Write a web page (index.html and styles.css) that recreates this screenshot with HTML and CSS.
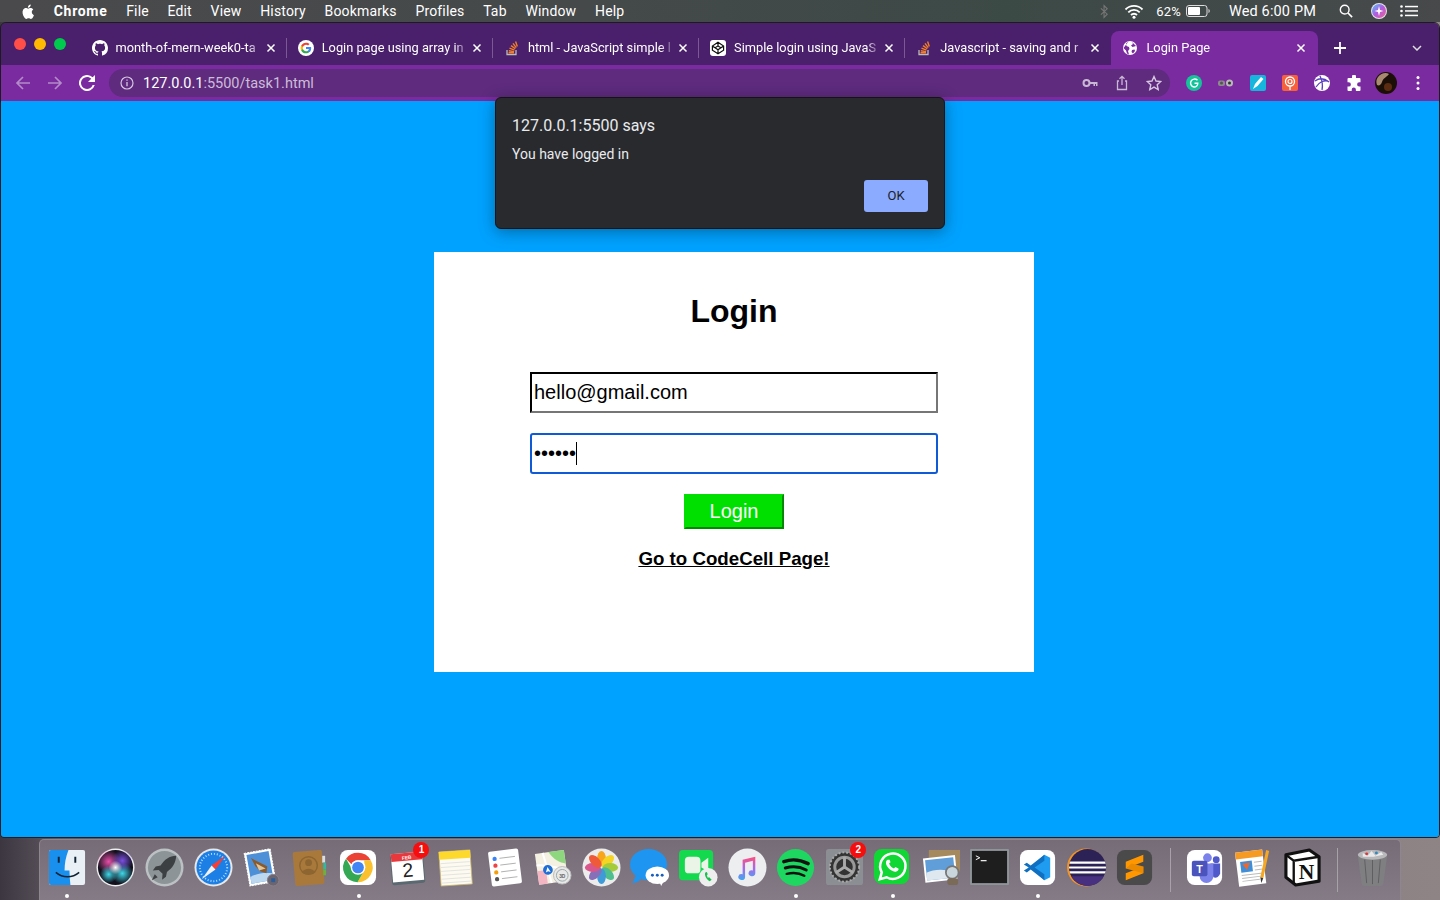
FILE: index.html
```html
<!DOCTYPE html>
<html lang="en">
<head>
<meta charset="utf-8">
<title>Login Page</title>
<link rel="stylesheet" href="styles.css">
</head>
<body>
<svg class="defs" width="0" height="0" aria-hidden="true">
  <defs>
    <symbol id="gh" viewBox="0 0 16 16"><path fill="#fff" d="M8 0C3.58 0 0 3.58 0 8c0 3.54 2.29 6.53 5.47 7.59.4.07.55-.17.55-.38 0-.19-.01-.82-.01-1.49-2.01.37-2.53-.49-2.69-.94-.09-.23-.48-.94-.82-1.13-.28-.15-.68-.52-.01-.53.63-.01 1.08.58 1.23.82.72 1.21 1.87.87 2.33.66.07-.52.28-.87.51-1.07-1.78-.2-3.64-.89-3.64-3.95 0-.87.31-1.59.82-2.15-.08-.2-.36-1.02.08-2.12 0 0 .67-.21 2.2.82.64-.18 1.32-.27 2-.27.68 0 1.36.09 2 .27 1.53-1.04 2.2-.82 2.2-.82.44 1.1.16 1.92.08 2.12.51.56.82 1.27.82 2.15 0 3.07-1.87 3.75-3.65 3.95.29.25.54.73.54 1.48 0 1.07-.01 1.93-.01 2.2 0 .21.15.46.55.38A8.013 8.013 0 0016 8c0-4.42-3.58-8-8-8z"/></symbol>
    <symbol id="goog" viewBox="0 0 48 48"><circle cx="24" cy="24" r="24" fill="#fff"/><g transform="translate(6.5 6.5) scale(.73)"><path fill="#4285f4" d="M45.12 24.5c0-1.56-.14-3.06-.4-4.5H24v8.51h11.84c-.51 2.75-2.06 5.08-4.39 6.64v5.52h7.11c4.16-3.83 6.56-9.47 6.56-16.17z"/><path fill="#34a853" d="M24 46c5.94 0 10.92-1.97 14.56-5.33l-7.11-5.52c-1.97 1.32-4.49 2.1-7.45 2.1-5.73 0-10.58-3.87-12.31-9.07H4.34v5.7C7.96 41.07 15.4 46 24 46z"/><path fill="#fbbc05" d="M11.69 28.18C11.25 26.86 11 25.45 11 24s.25-2.86.69-4.18v-5.7H4.34C2.85 17.09 2 20.45 2 24c0 3.55.85 6.91 2.34 9.88l7.35-5.7z"/><path fill="#ea4335" d="M24 10.75c3.23 0 6.13 1.11 8.41 3.29l6.31-6.31C34.91 4.18 29.93 2 24 2 15.4 2 7.96 6.93 4.34 14.12l7.35 5.7c1.73-5.2 6.58-9.07 12.31-9.07z"/></g></symbol>
    <symbol id="so" viewBox="0 0 16 16"><path d="M3 10v4.5h9V10" fill="none" stroke="#bbb" stroke-width="1.3"/><g stroke="#f48024" stroke-width="1.4"><path d="M4.6 12.8h5.4"/><path d="M4.8 10.7l5.3.9"/><path d="M5.5 8.2l5 2"/><path d="M7 5.6l4.3 3.1"/><path d="M9 3.4l3.2 4.2"/><path d="M11.6 1.6l1.7 4.8"/></g></symbol>
    <symbol id="cube" viewBox="0 0 16 16"><rect width="16" height="16" rx="3" fill="#fff"/><path d="M8 2.3L13.6 6v4.2L8 13.8 2.4 10.2V6z M2.4 6L8 9.8 13.6 6 M8 2.3v3.6L4.7 8 M8 5.9L11.3 8 M8 9.8v4" fill="none" stroke="#111" stroke-width="1.2"/></symbol>
    <symbol id="globe" viewBox="0 0 16 16"><circle cx="8" cy="8" r="7" fill="#fff"/><path d="M6.5 1.5L4 3.5l.5 2.5 2.5 1 .5 2L6 11l1 3.5-2-1-1-3L1.5 8M10 2l1 2-2 1.5 1.5 1.5 3.5-1M10 10l2.5-.5.5 1.5-2 2.5-1.5-1.5z" fill="#7a2ba0"/></symbol>
    <symbol id="close" viewBox="0 0 10 10"><path d="M1.5 1.5l7 7M8.5 1.5l-7 7" stroke="#fff" stroke-width="1.5" fill="none"/></symbol>
  </defs>
</svg>

<header class="menubar">
  <nav class="menu-left">
    <svg class="apple" viewBox="0 0 14 16"><path fill="#fff" d="M11.6 8.5c0-1.8 1.5-2.7 1.6-2.7-.9-1.3-2.2-1.5-2.7-1.5-1.1-.1-2.2.7-2.8.7-.6 0-1.5-.7-2.4-.7C4.1 4.3 3 5 2.3 6.1.9 8.5 2 12.1 3.3 14c.7 1 1.4 2 2.4 2 1 0 1.3-.6 2.5-.6 1.1 0 1.4.6 2.4.6 1 0 1.7-.9 2.3-1.9.7-1.1 1-2.2 1-2.3-.1 0-2.3-.9-2.3-3.3zM9.7 2.9c.5-.7.9-1.6.8-2.5-.8 0-1.7.5-2.3 1.2-.5.6-.9 1.500-.8 2.4.9.1 1.8-.4 2.3-1.1z"/></svg>
    <strong class="menu-app">Chrome</strong>
    <span>File</span><span>Edit</span><span>View</span><span>History</span><span>Bookmarks</span><span>Profiles</span><span>Tab</span><span>Window</span><span>Help</span>
  </nav>
  <div class="menu-right">
    <svg class="st-bt" viewBox="0 0 10 16"><path d="M1 4.5l7 6.5-3.5 3.5v-13L8 5 1 11.5" fill="none" stroke="#777" stroke-width="1.2"/></svg>
    <svg class="st-wifi" viewBox="0 0 20 15"><g fill="none" stroke="#fff" stroke-width="1.8"><path d="M1.5 5.5a12 12 0 0117 0"/><path d="M4.3 8.3a8 8 0 0111.4 0"/><path d="M7 11a4.2 4.2 0 016 0"/></g><circle cx="10" cy="13.3" r="1.5" fill="#fff"/></svg>
    <span class="st-pct">62%</span>
    <svg class="st-batt" viewBox="0 0 24 12"><rect x=".5" y=".5" width="20.5" height="11" rx="2.5" fill="none" stroke="#ddd"/><rect x="2" y="2" width="12" height="8" rx="1" fill="#fff"/><path d="M22.5 4v4c.8-.3 1.2-1 1.2-2s-.4-1.7-1.2-2z" fill="#ddd"/></svg>
    <span class="st-time">Wed 6:00 PM</span>
    <svg class="st-search" viewBox="0 0 16 16"><circle cx="6.5" cy="6.5" r="5" fill="none" stroke="#fff" stroke-width="1.6"/><path d="M10.3 10.3L15 15" stroke="#fff" stroke-width="1.9"/></svg>
    <svg class="st-siri" viewBox="0 0 16 16"><defs><linearGradient id="sg" x1="0" y1="0" x2="1" y2="1"><stop offset="0" stop-color="#4fc3f7"/><stop offset=".5" stop-color="#b05be0"/><stop offset="1" stop-color="#f06292"/></linearGradient></defs><circle cx="8" cy="8" r="8" fill="#e6e6ea"/><circle cx="8" cy="8" r="7" fill="url(#sg)"/><path d="M8 3l1 4 3.5 1-3.5 1-1 4-1-4-3.5-1 3.5-1z" fill="#fff"/></svg>
    <svg class="st-list" viewBox="0 0 18 12"><g fill="#fff"><circle cx="1.5" cy="1.5" r="1.3"/><circle cx="1.5" cy="6" r="1.3"/><circle cx="1.5" cy="10.5" r="1.3"/><rect x="5" y=".8" width="13" height="1.5"/><rect x="5" y="5.2" width="13" height="1.5"/><rect x="5" y="9.7" width="13" height="1.5"/></g></svg>
  </div>
</header>

<main class="window">
  <div class="tabstrip">
    <div class="lights"><i class="l-red"></i><i class="l-yellow"></i><i class="l-green"></i></div>
    <div class="tab"><svg class="fav"><use href="#gh"/></svg><span class="tab-title">month-of-mern-week0-ta</span><svg class="tab-x"><use href="#close"/></svg></div>
    <div class="tab"><svg class="fav"><use href="#goog"/></svg><span class="tab-title">Login page using array in</span><svg class="tab-x"><use href="#close"/></svg></div>
    <div class="tab"><svg class="fav"><use href="#so"/></svg><span class="tab-title">html - JavaScript simple l</span><svg class="tab-x"><use href="#close"/></svg></div>
    <div class="tab"><svg class="fav"><use href="#cube"/></svg><span class="tab-title">Simple login using JavaS</span><svg class="tab-x"><use href="#close"/></svg></div>
    <div class="tab tab-last"><svg class="fav"><use href="#so"/></svg><span class="tab-title">Javascript - saving and r</span><svg class="tab-x"><use href="#close"/></svg></div>
    <div class="tab tab-active"><svg class="fav"><use href="#globe"/></svg><span class="tab-title">Login Page</span><svg class="tab-x"><use href="#close"/></svg></div>
    <svg class="newtab" viewBox="0 0 12 12"><path d="M6 0v12M0 6h12" stroke="#fff" stroke-width="1.8"/></svg>
    <svg class="tabmenu" viewBox="0 0 10 6"><path d="M1 1l4 4 4-4" fill="none" stroke="#ddd" stroke-width="1.5"/></svg>
  </div>

  <div class="toolbar">
    <svg class="nav" viewBox="0 0 16 16"><path d="M15 8H2M8 2L2 8l6 6" fill="none" stroke="#b48bc9" stroke-width="1.7"/></svg>
    <svg class="nav" viewBox="0 0 16 16"><path d="M1 8h13M8 2l6 6-6 6" fill="none" stroke="#b48bc9" stroke-width="1.7"/></svg>
    <svg class="nav" viewBox="0 0 16 16"><path fill="#fff" d="M13.65 2.35A8 8 0 1 0 15.73 10h-2.08A6 6 0 1 1 8 2c1.66 0 3.14.69 4.22 1.78L9 7h7V0z"/></svg>
    <div class="omnibox">
      <svg class="info" viewBox="0 0 14 14"><circle cx="7" cy="7" r="6" fill="none" stroke="#d6c6e0" stroke-width="1.2"/><path d="M7 6v4.2M7 3.4v1.4" stroke="#d6c6e0" stroke-width="1.3"/></svg>
      <span class="url"><b>127.0.0.1</b>:5500/task1.html</span>
      <svg class="omni-ico" viewBox="0 0 16 16"><circle cx="4.5" cy="8" r="3" fill="none" stroke="#c9b8d4" stroke-width="2"/><path d="M7.5 7h8v4H14V9h-1v2h-1.500V9h-4z" fill="#c9b8d4"/></svg>
      <svg class="omni-ico" viewBox="0 0 16 16"><path d="M5 6H3.5v8.500h9V6H11M8 10V1.500M5.500 3.800L8 1.300l2.500 2.500" fill="none" stroke="#c9b8d4" stroke-width="1.3"/></svg>
      <svg class="omni-ico" viewBox="0 0 16 16"><path d="M8 1.500l2 4.500 4.800.5-3.600 3.200 1 4.800L8 12.100l-4.200 2.400 1-4.800L1.200 6.500 6 6z" fill="none" stroke="#d6c6e0" stroke-width="1.4"/></svg>
    </div>
    <div class="exts">
      <svg class="ext" viewBox="0 0 16 16"><circle cx="8" cy="8" r="8" fill="#15c39a"/><path d="M11.500 5.300A4 4 0 108 12a3.800 3.800 0 003.800-3.800H8.500" fill="none" stroke="#fff" stroke-width="1.4"/></svg>
      <svg class="ext" viewBox="0 0 16 16"><rect x="0" y="5.5" width="7" height="5.5" rx="2" fill="#8c8c8c"/><circle cx="11.5" cy="8" r="3.5" fill="#b9b9b9"/><circle cx="11.5" cy="8" r="1.5" fill="#333"/><circle cx="3.5" cy="8" r="1.5" fill="#555"/></svg>
      <svg class="ext" viewBox="0 0 16 16"><rect width="16" height="16" rx="2" fill="#15b5dd"/><path d="M3 14l2-5 6-7 2.500 2-6 7z" fill="#fff"/></svg>
      <svg class="ext" viewBox="0 0 16 16"><rect width="16" height="16" rx="2" fill="#f7603c"/><circle cx="8" cy="6.5" r="4.5" fill="none" stroke="#fff" stroke-width="1.3"/><circle cx="8" cy="6.5" r="2" fill="none" stroke="#fff" stroke-width="1.2"/><path d="M8 11v4" stroke="#fff" stroke-width="1.3"/></svg>
      <svg class="ext" viewBox="0 0 16 16"><circle cx="8" cy="8" r="8" fill="#fff"/><g fill="none" stroke="#5a3fc0" stroke-width="1.3"><path d="M1 6c4-3 9-3 14 1M2 12c3-5 8-7 12-6M6 1c2 4 3 9 2 14"/></g></svg>
      <svg class="ext" viewBox="0 0 16 16"><path fill="#fff" d="M6 1.500a2 2 0 014 0V3h3.500a1 1 0 011 1v3.300h-1.300a2.100 2.100 0 000 4.200h1.300V15a1 1 0 01-1 1H9.900v-1.300a2.100 2.100 0 00-4.200 0V16H2.500a1 1 0 01-1-1v-3.400h1.200a2.200 2.200 0 000-4.400H1.500V4a1 1 0 011-1H6z"/></svg>
      <svg class="ext avatar" viewBox="0 0 22 22"><circle cx="11" cy="11" r="11" fill="#1c0f08"/><path d="M3 5c3-4 8-5 11-3-2 3-6 4-7 8-1 3-3 4-5 3-1-3-1-5 1-8z" fill="#a88a70"/><circle cx="13" cy="15" r="4" fill="#5b2c12"/></svg>
      <svg class="ext kebab" viewBox="0 0 4 16"><g fill="#fff"><circle cx="2" cy="2.5" r="1.5"/><circle cx="2" cy="8" r="1.5"/><circle cx="2" cy="13.5" r="1.5"/></g></svg>
    </div>
  </div>

  <section class="page">
    <form class="card">
      <h1 class="card-title">Login</h1>
      <input class="field" type="email" value="hello@gmail.com" aria-label="Email">
      <div class="pw-wrap">
        <input class="field field-focus" type="password" value="secret" aria-label="Password">
        <i class="caret"></i>
      </div>
      <button class="login-btn" type="button">Login</button>
      <a class="code-link" href="#">Go to CodeCell Page!</a>
    </form>
  </section>
</main>

<aside class="alert" role="alertdialog">
  <div class="alert-title">127.0.0.1:5500 says</div>
  <div class="alert-msg">You have logged in</div>
  <div class="alert-actions"><button class="alert-ok" type="button">OK</button></div>
</aside>

<footer class="dock">
  <!-- Finder -->
  <div class="di run"><svg viewBox="0 0 40 40"><rect x="1" y="2" width="37" height="36" rx="2" fill="#e9f1f7"/><path d="M3 2h18c-3 8-4 14-4 21h5c0 5 .5 10 1 15H3a2 2 0 01-2-2V4a2 2 0 012-2z" fill="#1a90ee"/><path d="M11 9v6M28 9v6" stroke="#123" stroke-width="2"/><path d="M8 25c7 6 17 6 24 0" fill="none" stroke="#123" stroke-width="1.5"/></svg></div>
  <!-- Siri -->
  <div class="di"><svg viewBox="0 0 40 40"><defs><radialGradient id="sb1"><stop offset="0" stop-color="#e84fa8"/><stop offset="1" stop-color="#e84fa8" stop-opacity="0"/></radialGradient><radialGradient id="sb2"><stop offset="0" stop-color="#3fd8e8"/><stop offset="1" stop-color="#3fd8e8" stop-opacity="0"/></radialGradient><radialGradient id="sb3"><stop offset="0" stop-color="#7a4fe0"/><stop offset="1" stop-color="#7a4fe0" stop-opacity="0"/></radialGradient><radialGradient id="sb4"><stop offset="0" stop-color="#fff"/><stop offset="1" stop-color="#fff" stop-opacity="0"/></radialGradient></defs><circle cx="20" cy="20" r="19.5" fill="#eee"/><circle cx="20" cy="20" r="18" fill="#12101c"/><circle cx="13" cy="14" r="12" fill="url(#sb1)"/><circle cx="27" cy="26" r="11" fill="url(#sb2)"/><circle cx="27" cy="13" r="11" fill="url(#sb3)"/><circle cx="13" cy="27" r="9" fill="url(#sb2)"/><circle cx="20" cy="20" r="7" fill="url(#sb4)"/></svg></div>
  <!-- Launchpad -->
  <div class="di"><svg viewBox="0 0 40 40"><circle cx="20" cy="20" r="19.5" fill="#bcc2c4"/><circle cx="20" cy="20" r="17" fill="#8d9497"/><path d="M32 8c-7 0-12 4-16 10l-5 1-3 4 6-.5 4 4-.5 6 4-3 1-5c6-4 9-9 9.5-16.500z" fill="#3c4043"/><path d="M10 27l-3 6 6-3z" fill="#3c4043"/></svg></div>
  <!-- Safari -->
  <div class="di"><svg viewBox="0 0 40 40"><circle cx="20" cy="20" r="19.5" fill="#e8e8e8"/><circle cx="20" cy="20" r="17.5" fill="#1b7fe6"/><circle cx="20" cy="20" r="14" fill="none" stroke="#bcdcf8" stroke-width="2" stroke-dasharray="1 2"/><path d="M32 8L18 18l4 4z" fill="#ff3b30"/><path d="M8 32l14-10-4-4z" fill="#f2f2f2"/></svg></div>
  <!-- Mail -->
  <div class="di"><svg viewBox="0 0 40 40"><g transform="rotate(-10 18 20)"><rect x="5" y="3" width="27" height="34" fill="#fff" stroke="#fff" stroke-dasharray="2 1"/><rect x="7" y="5" width="23" height="30" fill="#4d90d8"/><path d="M7 28c8-3 15-2 23 0v7H7z" fill="#bcd8f0"/><path d="M11 9l8 6 7 5-2 7-6-3-4-6z" fill="#8a5a2b"/><path d="M15 15l9 7-7 1z" fill="#e0c49a"/></g><circle cx="32" cy="33" r="6" fill="#6b6570" stroke="#8a828c"/><rect x="30" y="31" width="4" height="4" fill="#2a5d9c"/></svg></div>
  <!-- Contacts -->
  <div class="di"><svg viewBox="0 0 40 40"><rect x="3" y="3" width="30" height="35" rx="2" transform="rotate(-5 18 20)" fill="#a9793c"/><rect x="32" y="8" width="3" height="7" fill="#ddd"/><rect x="33" y="15" width="3" height="7" fill="#35b6a0"/><rect x="33" y="22" width="3" height="6" fill="#6fb03d"/><circle cx="18" cy="18" r="9" fill="none" stroke="#8d6530" stroke-width="1.5"/><circle cx="18" cy="15" r="3.5" fill="#8d6530"/><path d="M11 25c3-5 11-5 14 0-4 3-10 3-14 0z" fill="#8d6530"/></svg></div>
  <!-- Chrome -->
  <div class="di run"><svg viewBox="0 0 40 40"><rect x="1" y="2" width="37" height="36" rx="8" fill="#fff"/><path d="M19.5 5a15 15 0 0113 7.5H19.5a7.500 7.500 0 00-6.700 4.200L7.200 11A15 15 0 0119.5 5z" fill="#ea4335"/><path d="M32.5 12.500A15 15 0 0119 35l6.500-11.300a7.500 7.500 0 00.5-7.700l-.2-3.500z" fill="#fbc02d"/><path d="M7.200 11l6.500 11.300A7.500 7.500 0 0025.500 23.700L19 35A15 15 0 017.200 11z" fill="#34a853"/><circle cx="19.5" cy="20" r="7.5" fill="#fff"/><circle cx="19.5" cy="20" r="6" fill="#4285f4"/></svg></div>
  <!-- Calendar -->
  <div class="di"><svg viewBox="0 0 40 40"><g transform="rotate(-5 20 20)"><rect x="3" y="5" width="34" height="32" rx="2" fill="#5a6870"/><rect x="4" y="5" width="32" height="29" fill="#fff"/><rect x="4" y="5" width="32" height="8" fill="#e8383b"/><text class="cal-mon" x="20" y="11.5" text-anchor="middle">FEB</text><text class="cal-day" x="20" y="29.5" text-anchor="middle">2</text></g></svg><b class="badge">1</b></div>
  <!-- Notes -->
  <div class="di"><svg viewBox="0 0 40 40"><g transform="rotate(-4 20 20)"><rect x="4" y="3" width="32" height="35" fill="#fdfaf0" stroke="#c9b66a" stroke-width=".8"/><rect x="4" y="3" width="32" height="8" fill="#fcd92c"/><g stroke="#ddd" stroke-width=".8"><path d="M5 15h30M5 19h30M5 23h30M5 27h30M5 31h30M5 35h30"/></g></g></svg></div>
  <!-- Reminders -->
  <div class="di"><svg viewBox="0 0 40 40"><g transform="rotate(-7 20 20)"><rect x="5" y="2" width="31" height="36" rx="2" fill="#fff"/><circle cx="11" cy="10" r="2.2" fill="#3b82f6"/><circle cx="11" cy="17" r="2.2" fill="#ef4444"/><circle cx="11" cy="24" r="2.2" fill="#f59e0b"/><circle cx="11" cy="31" r="2.2" fill="#555"/><g stroke="#aaa" stroke-width=".9"><path d="M16 10h16M16 17h16M16 24h16M16 31h16"/></g></g></svg></div>
  <!-- Maps -->
  <div class="di"><svg viewBox="0 0 40 40"><g transform="rotate(-8 18 20)"><rect x="4" y="4" width="30" height="32" fill="#f4f0e2"/><path d="M18 4h16v14c-6-1-12-6-16-14z" fill="#8ed77f"/><path d="M4 22h9v14H4z" fill="#f4b6c2"/><path d="M12 4l5 32M4 16c12 0 20 6 30 8" stroke="#fff" stroke-width="2" fill="none"/><circle cx="15" cy="22" r="5" fill="#1e6ed8"/><path d="M15 19l2.500 5.500-2.500-1-2.500 1z" fill="#fff"/></g><circle cx="30" cy="28" r="9" fill="#e8e8e8" stroke="#bbb"/><circle cx="30" cy="28" r="6" fill="none" stroke="#9aa"/><text class="map3d" x="30" y="30.5" text-anchor="middle">3D</text></svg></div>
  <!-- Photos -->
  <div class="di"><svg viewBox="0 0 40 40"><circle cx="20" cy="20" r="19.5" fill="#ececec"/><g transform="translate(20 20)"><ellipse cy="-9" rx="4.5" ry="8" fill="#f8a51c"/><ellipse cy="-9" rx="4.5" ry="8" fill="#f5d423" transform="rotate(45)"/><ellipse cy="-9" rx="4.5" ry="8" fill="#a4cc3a" transform="rotate(90)"/><ellipse cy="-9" rx="4.5" ry="8" fill="#4fbf8f" transform="rotate(135)"/><ellipse cy="-9" rx="4.5" ry="8" fill="#3f9ad8" transform="rotate(180)"/><ellipse cy="-9" rx="4.5" ry="8" fill="#8870b8" transform="rotate(225)"/><ellipse cy="-9" rx="4.5" ry="8" fill="#d8568c" transform="rotate(270)"/><ellipse cy="-9" rx="4.5" ry="8" fill="#ee5a3a" transform="rotate(315)"/></g></svg></div>
  <!-- Messages -->
  <div class="di"><svg viewBox="0 0 40 40"><ellipse cx="19" cy="17" rx="19" ry="16" fill="#1e95f0"/><path d="M6 26c0 4-2 8-4 10 4 0 8-2 10-5z" fill="#1e95f0"/><ellipse cx="28" cy="28" rx="12" ry="9" fill="#fff"/><path d="M30 34l2 5 3-6z" fill="#fff"/><g fill="#1a5fc0"><circle cx="23" cy="28" r="1.5"/><circle cx="28" cy="28" r="1.5"/><circle cx="33" cy="28" r="1.5"/></g></svg></div>
  <!-- FaceTime -->
  <div class="di"><svg viewBox="0 0 40 40"><rect y="2" width="35" height="31" rx="4" fill="#14d94e"/><rect x="6" y="9" width="16" height="17" rx="4" fill="#eaf5e8"/><path d="M23 15l7-5v14l-7-4z" fill="#eaf5e8"/><circle cx="30" cy="30" r="9.5" fill="#eee"/><path d="M27 25c-1 2 0 6 4.500 9l2-1.500-2.500-2.500-1.500.5-1-2.500 1-1-1-2.500z" fill="#14c24a"/></svg></div>
  <!-- Music -->
  <div class="di"><svg viewBox="0 0 40 40"><defs><linearGradient id="mg" x1="0" y1="0" x2="0" y2="1"><stop offset="0" stop-color="#ff4f7a"/><stop offset=".5" stop-color="#a868e8"/><stop offset="1" stop-color="#3fa8f0"/></linearGradient></defs><circle cx="20" cy="20" r="19.5" fill="#eceef0"/><path d="M15 12l13-3v17a3.500 3 0 11-2.500-3V13l-8 2v15a3.500 3 0 11-2.500-3z" fill="url(#mg)"/></svg></div>
  <!-- Spotify -->
  <div class="di run"><svg viewBox="0 0 40 40"><circle cx="20" cy="20" r="19" fill="#1ed760"/><g fill="none" stroke="#111" stroke-linecap="round"><path d="M8 14c8-3 17-2 25 2" stroke-width="3.5"/><path d="M9.5 20.500c7-2 15-1.500 21.500 2" stroke-width="3"/><path d="M11 26.500c6-1.500 13-1 18 2" stroke-width="2.5"/></g></svg></div>
  <!-- System Prefs -->
  <div class="di"><svg viewBox="0 0 40 40"><rect x="1" y="1" width="38" height="37" rx="3" fill="#8b8f93"/><circle cx="20" cy="19.5" r="15" fill="#333"/><circle cx="20" cy="19.5" r="15" fill="none" stroke="#aaa" stroke-width="2" stroke-dasharray="2 2"/><circle cx="20" cy="19.5" r="10" fill="none" stroke="#999" stroke-width="3"/><path d="M20 19.5V9M20 19.5l9 6M20 19.5l-9 6" stroke="#aaa" stroke-width="3"/></svg><b class="badge">2</b></div>
  <!-- WhatsApp -->
  <div class="di run"><svg viewBox="0 0 40 40"><rect x="1" y="1" width="36" height="36" rx="8" fill="#10d733"/><path d="M7 32l2-7a13 13 0 115 5z" fill="none" stroke="#fff" stroke-width="2.6"/><path d="M15 12c-2 1-2.500 4 0 7.500s6.500 5.500 9 4.500 2.500-2.500 2-3l-3-1.500-1.500 1.500c-2-.5-4-2.500-5-5l1.500-1.500-1-2.500z" fill="#fff"/></svg></div>
  <!-- Preview -->
  <div class="di"><svg viewBox="0 0 40 40"><rect x="7" y="2" width="32" height="22" fill="#a68a5f"/><g transform="rotate(-6 18 20)"><rect x="2" y="9" width="33" height="25" fill="#fff"/><rect x="4" y="11" width="29" height="21" fill="#5f9ed8"/><path d="M4 24c8-3 18-2 29 2v6H4z" fill="#dfe8ee"/></g><circle cx="31" cy="25" r="6.5" fill="#c9d6dc" stroke="#777" stroke-width="1.8"/><rect x="26" y="31" width="11" height="7" rx="2" fill="#7a6a58"/></svg></div>
  <!-- Terminal -->
  <div class="di"><svg viewBox="0 0 40 40"><rect y="1" width="40" height="37" rx="1" fill="#8d9599"/><rect x="2" y="3" width="36" height="33" fill="#1e1e1e"/><path d="M6 8l4 2-4 2" fill="none" stroke="#fff" stroke-width="1"/><path d="M11 13h6" stroke="#fff" stroke-width="1.2"/></svg></div>
  <!-- VS Code -->
  <div class="di run"><svg viewBox="0 0 40 40"><rect x="1" y="2" width="36" height="36" rx="8" fill="#fff"/><path d="M26 7l6 3v20l-6 3-14-13z" fill="#1f9cf0"/><path d="M26 7v6L16 20l10 7v6L12 22l-4 3-3-2 5-3-5-3 3-2 4 3z" fill="#0f6fc0"/></svg></div>
  <!-- Eclipse -->
  <div class="di"><svg viewBox="0 0 40 40"><circle cx="19.5" cy="20" r="19.5" fill="#f7941e"/><circle cx="21" cy="20" r="19" fill="#2c2255"/><clipPath id="ecl"><circle cx="21" cy="20" r="19"/></clipPath><g clip-path="url(#ecl)"><path d="M0 15h40M0 20h40M0 25h40" stroke="#fff" stroke-width="2.2"/><path d="M4 29h34v10H4z" fill="#47307f"/></g></svg></div>
  <!-- Sublime -->
  <div class="di"><svg viewBox="0 0 40 40"><rect x="1" y="2" width="36" height="36" rx="8" fill="#4a4a4a"/><path d="M28 7v7L10 21v-7zM10 33v-7l18-7v7z" fill="#ff9800"/><path d="M10 21l18 5v-7l-12-3z" fill="#e98a00"/></svg></div>
  <i class="dock-sep"></i>
  <!-- Teams -->
  <div class="di"><svg viewBox="0 0 40 40"><rect x="1" y="2" width="36" height="36" rx="8" fill="#fff"/><circle cx="22" cy="10" r="4.5" fill="#7b83eb"/><circle cx="31" cy="12" r="3.5" fill="#5059c9"/><path d="M25 16h10v10a5 5 0 01-7 4z" fill="#5059c9"/><path d="M14 16h14v13a7 7 0 01-14 0z" fill="#7b83eb"/><rect x="6" y="13" width="16" height="16" rx="2" fill="#4b53bc"/><text class="teams-t" x="14" y="25.5" text-anchor="middle">T</text></svg></div>
  <!-- Pages -->
  <div class="di"><svg viewBox="0 0 40 40"><g transform="rotate(-7 18 20)"><rect x="3" y="3" width="28" height="35" fill="#fff"/><rect x="3" y="3" width="28" height="7" fill="#f59a23"/><rect x="7" y="13" width="12" height="11" fill="#3f8fd8"/><path d="M9 15h8l-4 7z" fill="#f0672b"/><g stroke="#bbb"><path d="M21 15h8M21 19h8M21 23h8M7 27h22M7 30h22M7 33h18"/></g></g><path d="M33 2l3 1-6 28-3-1z" fill="#f7a823"/><path d="M27 30l3 1-2 5z" fill="#333"/></svg></div>
  <!-- Notion -->
  <div class="di"><svg viewBox="0 0 40 40"><path d="M3 7l24-5 10 7v25l-24 4-10-8z" fill="#fff" stroke="#111" stroke-width="3.2" stroke-linejoin="round"/><path d="M3 7l8 6 26-4M11 13v24" fill="none" stroke="#111" stroke-width="2.4"/><text class="notion-n" x="24" y="32" text-anchor="middle">N</text></svg></div>
  <i class="dock-sep"></i>
  <!-- Trash -->
  <div class="di"><svg viewBox="0 0 40 40"><path d="M5 8h30l-4 29a3 3 0 01-3 2H12a3 3 0 01-3-2z" fill="#7f7f82"/><g stroke="#5f5f62"><path d="M12 12l2 24M20 12v25M28 12l-2 24"/></g><ellipse cx="20" cy="7" rx="15" ry="5" fill="#b9b9bc"/><path d="M10 5l5 3 4-5 4 5 6-4 2 3-10 2-11 0z" fill="#e9e9ec"/><circle cx="14" cy="6" r="1.5" fill="#d33"/><circle cx="24" cy="5" r="1.5" fill="#38b"/></svg></div>
</footer>
</body>
</html>
```

FILE: styles.css
```css
* { box-sizing: border-box; }

html, body {
  margin: 0;
  height: 100%;
}

body {
  width: 1440px;
  height: 900px;
  overflow: hidden;
  position: relative;
  font-family: Roboto, "Liberation Sans", sans-serif;
  background: linear-gradient(90deg, #3b3640 0, #5f5760 4%, #7d7378 50%, #8f8485 100%);
}

.defs { position: absolute; }

/* macOS menu bar */
.menubar {
  height: 22px;
  display: flex;
  justify-content: space-between;
  align-items: center;
  color: #fff;
  font-size: 14px;
  letter-spacing: .15px;
  background: linear-gradient(90deg, #4a4a4c 0, #45494a 40%, #3c4a46 70%, #47494b 100%);
}

.menu-left {
  display: flex;
  align-items: center;
  gap: 18.75px;
  padding-left: 21px;
}

.apple { width: 13px; height: 15px; margin-right: 1px; }
.menu-app { font-weight: 700; letter-spacing: .7px; }

.menu-right {
  display: flex;
  align-items: center;
  padding-right: 22px;
}

.st-bt { width: 9px; height: 15px; margin-right: 15px; }
.st-wifi { width: 20px; height: 15px; margin-right: 12px; }
.st-pct { font-size: 13px; margin-right: 5px; }
.st-batt { width: 24px; height: 12px; margin-right: 19px; }
.st-time { font-size: 14.5px; margin-right: 23px; }
.st-search { width: 14px; height: 14px; margin-right: 18px; }
.st-siri { width: 16px; height: 16px; margin-right: 13px; }
.st-list { width: 18px; height: 12px; }

/* Chrome window */
.window {
  height: 816px;
  display: flex;
  flex-direction: column;
  border: 1px solid #1c1c1e;
  border-radius: 6px 6px 4px 4px;
  overflow: hidden;
}

.tabstrip {
  height: 42px;
  flex: none;
  background: #4a1f6b;
  display: flex;
  align-items: flex-end;
}

.lights {
  width: 79.5px;
  height: 42px;
  flex: none;
  display: flex;
  gap: 8px;
  padding: 15px 0 0 12.5px;
}

.lights i {
  width: 12px;
  height: 12px;
  border-radius: 50%;
}

.l-red { background: #ff4e48; }
.l-yellow { background: #ffb900; }
.l-green { background: #00ca4e; }

.tab {
  width: 206.2px;
  height: 34px;
  flex: none;
  display: flex;
  align-items: center;
  padding-left: 11px;
  color: #fff;
  font-size: 12.8px;
  position: relative;
}

.tab::after {
  content: "";
  position: absolute;
  right: 0;
  top: 7px;
  height: 20px;
  width: 1px;
  background: #7a5a92;
}

.tab-last::after, .tab-active::after { display: none; }

.tab-active {
  background: #7a2ba0;
  border-radius: 8px 8px 0 0;
}

.fav { width: 16px; height: 16px; flex: none; margin-right: 8px; }

.tab-title {
  width: 147px;
  flex: none;
  margin-top: -2px;
  white-space: nowrap;
  -webkit-mask-image: linear-gradient(90deg, #000 90%, transparent 100%);
  mask-image: linear-gradient(90deg, #000 90%, transparent 100%);
}

.tab-x { width: 10px; height: 10px; flex: none; margin-left: 3px; }

.newtab { width: 12px; height: 12px; margin: 0 0 11px 16px; flex: none; }
.tabmenu { width: 10px; height: 6px; margin: 0 0 14px 66px; flex: none; }

.toolbar {
  height: 36px;
  flex: none;
  background: #7a2ba0;
  display: flex;
  align-items: center;
  padding-left: 14px;
}

.nav { width: 16px; height: 16px; flex: none; margin-right: 16px; }

.omnibox {
  width: 1061px;
  height: 28px;
  margin-left: -2px;
  flex: none;
  background: #5e2b7e;
  border-radius: 14px;
  display: flex;
  align-items: center;
  padding-left: 11px;
  font-size: 14.5px;
  color: #cdbcd8;
}

.info { width: 14px; height: 14px; margin-right: 9px; flex: none; }
.url { flex: 1; }
.url b { color: #fff; font-weight: 400; }

.omni-ico { width: 16px; height: 16px; flex: none; margin-right: 16px; }
.omni-ico:last-child { margin-right: 8px; }

.exts {
  display: flex;
  align-items: center;
  gap: 16px;
  padding-left: 16px;
}

.ext { width: 16px; height: 16px; flex: none; }
.avatar { width: 22px; height: 22px; margin: 0 -3px; }
.kebab { width: 4px; height: 16px; margin-left: 6px; }

/* page */
.page {
  flex: 1;
  background: #00a2ff;
  display: flex;
  flex-direction: column;
  align-items: center;
  padding: 151px 0 0 28px;
}

.card {
  width: 600px;
  height: 420px;
  background: #fff;
  display: flex;
  flex-direction: column;
  align-items: center;
  padding-top: 40px;
  font-family: "Liberation Sans", Arial, sans-serif;
}

.card-title {
  margin: 0;
  font-size: 32px;
  line-height: 38px;
  font-weight: 700;
  color: #000;
}

.field {
  display: block;
  width: 408px;
  height: 41px;
  margin-top: 42px;
  padding: 1px 2px;
  font: 20px "Liberation Sans", Arial, sans-serif;
  color: #000;
  background: #fff;
  border: 2px inset #767676;
  border-color: #2b2b2b #767676 #767676 #2b2b2b;
  border-radius: 0;
  outline: none;
}

.pw-wrap {
  position: relative;
  margin-top: 20px;
}

.pw-wrap .field { margin-top: 0; }

.field-focus {
  border: 2px solid #0f5bd5;
  border-radius: 3px;
}

.caret {
  position: absolute;
  left: 46px;
  top: 9px;
  width: 1px;
  height: 23px;
  background: #000;
}

.login-btn {
  width: 100px;
  height: 35px;
  margin-top: 20px;
  padding: 0;
  font: 20px "Liberation Sans", Arial, sans-serif;
  color: #fff;
  background: #00e000;
  border: 2px solid;
  border-color: #00e000 #008a00 #008a00 #00e000;
}

.code-link {
  margin-top: 19px;
  font-size: 18.72px;
  line-height: 21px;
  font-weight: 700;
  color: #000;
  text-decoration: underline;
}

/* alert dialog overlays the page */
.alert {
  position: absolute;
  left: 495px;
  top: 97px;
  width: 450px;
  height: 132px;
  padding: 0 16px 16px 16px;
  background: #292a2d;
  border: 1px solid #141416;
  border-radius: 6px;
  box-shadow: 0 3px 16px rgba(0, 0, 0, .35);
  color: #e8eaed;
  display: flex;
  flex-direction: column;
}

.alert-title {
  margin-top: 18px;
  font-size: 16px;
  line-height: 20px;
}

.alert-msg {
  margin-top: 9px;
  font-size: 14px;
  line-height: 18px;
}

.alert-actions {
  margin-top: auto;
  display: flex;
  justify-content: flex-end;
}

.alert-ok {
  width: 64px;
  height: 32px;
  padding: 0 0 2px;
  border: 0;
  border-radius: 3px;
  background: #8aabff;
  color: #202124;
  font: 400 13px Roboto, sans-serif;
}

/* dock overlays the desktop */
.dock {
  position: absolute;
  left: 39px;
  bottom: 0;
  width: 1362px;
  height: 61px;
  padding: 8px 0 0 3.1px;
  background: linear-gradient(180deg, #766c78, #857b87);
  border: 1px solid #8f8790;
  border-bottom: 0;
  border-radius: 5px 5px 0 0;
  display: flex;
  align-items: flex-start;
}

.di {
  width: 48.55px;
  height: 40px;
  flex: none;
  display: flex;
  justify-content: center;
  position: relative;
}

.di svg { width: 39px; height: 39px; }

.run::after {
  content: "";
  position: absolute;
  left: 50%;
  top: 46px;
  width: 4px;
  height: 4px;
  margin-left: -2px;
  border-radius: 50%;
  background: #fff;
}

.badge {
  position: absolute;
  right: 2px;
  top: -6px;
  width: 16px;
  height: 16px;
  border-radius: 50%;
  background: #f60d0d;
  color: #fff;
  font: 700 10px/16px "Liberation Sans", sans-serif;
  letter-spacing: 0;
  text-align: center;
}

.dock-sep {
  width: 1px;
  height: 44px;
  margin: 0 10.2px;
  flex: none;
  background: #a8a1aa;
}

.cal-mon { font: 700 5px "Liberation Sans", sans-serif; fill: #fff; }
.cal-day { font: 20px "Liberation Sans", sans-serif; fill: #222; }
.map3d { font: 700 5px "Liberation Sans", sans-serif; fill: #666; }
.teams-t { font: 700 11px "Liberation Sans", sans-serif; fill: #fff; }
.notion-n { font: 700 22px "Liberation Serif", serif; fill: #111; }
```
